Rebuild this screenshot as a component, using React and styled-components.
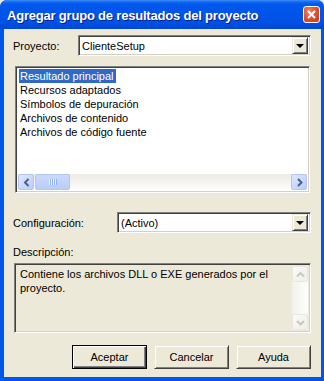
import React from "react";
import styled, { createGlobalStyle, css } from "styled-components";

const Global = createGlobalStyle`
  html, body { margin: 0; padding: 0; background: #ECE9D8; overflow: hidden; }
  body { font-family: "Liberation Sans", Arial, sans-serif; font-size: 11px; color: #000; }
`;

const Window = styled.div`
  width: 324px;
  height: 381px;
  display: flex;
  flex-direction: column;
  box-sizing: border-box;
  background: #0055EA;
  border-radius: 7px 7px 0 0;
  overflow: hidden;
`;

const TitleBar = styled.div`
  height: 29px;
  flex: none;
  display: flex;
  align-items: center;
  justify-content: space-between;
  padding: 0 4px 0 7px;
  box-sizing: border-box;
  background: linear-gradient(to bottom, #3C8CF6 0px, #1569F0 2px, #0058EE 4px, #0055E8 14px, #0052E5 22px, #004AD9 27px, #0045D0 29px);
`;

const TitleText = styled.div`
  color: #fff;
  font-family: "Liberation Sans", Arial, sans-serif;
  font-weight: bold;
  font-size: 13px;
  letter-spacing: -0.2px;
  text-shadow: 1px 1px 0 #0A1E8C;
  white-space: nowrap;
  margin-top: 1px;
`;

const CloseButton = styled.div`
  width: 17px;
  height: 17px;
  box-sizing: border-box;
  border: 1px solid #fff;
  border-radius: 3px;
  background: radial-gradient(circle at 35% 30%, #F08A6A 0%, #E2542C 45%, #C93A12 100%);
  display: flex;
  align-items: center;
  justify-content: center;
  margin-top: -1px;
`;

const Body = styled.div`
  flex: 1;
  display: flex;
  flex-direction: column;
  background: #ECE9D8;
  margin: 0 3px 4px 4px;
  padding: 6px 10px 0 9px;
  box-sizing: border-box;
`;

const FieldRow = styled.div`
  display: flex;
  align-items: center;
  margin-top: ${(p) => p.$top}px;
`;

const Label = styled.div`
  width: ${(p) => p.$width}px;
  flex: none;
`;

const sunken = css`
  border: 1px solid;
  border-color: #808080 #fff #fff #808080;
  box-shadow: inset 1px 1px 0 #404040, inset -1px -1px 0 #D4D0C8;
`;

const Combo = styled.div`
  flex: 1;
  height: 21px;
  box-sizing: border-box;
  ${sunken};
  background: #fff;
  display: flex;
  align-items: center;
  padding: 2px;
`;

const ComboValue = styled.div`
  flex: 1;
  padding-left: 1px;
`;

const raised = css`
  background: #ECE9D8;
  box-sizing: border-box;
  border: 1px solid;
  border-color: #ECE9D8 #404040 #404040 #ECE9D8;
  box-shadow: inset 1px 1px 0 #fff, inset -1px -1px 0 #808080;
`;

const ComboButton = styled.div`
  width: 16px;
  height: 17px;
  ${raised};
  display: flex;
  align-items: center;
  justify-content: center;
`;

const Triangle = styled.div`
  width: 0;
  height: 0;
  border-left: 4px solid transparent;
  border-right: 4px solid transparent;
  border-top: 4px solid #000;
  margin-top: 1px;
`;

const ListBox = styled.div`
  margin-top: 10px;
  margin-left: 2px;
  margin-right: 1px;
  height: 127px;
  box-sizing: border-box;
  ${sunken};
  background: #fff;
  display: flex;
  flex-direction: column;
  padding: 2px;
`;

const ListItems = styled.div`
  flex: 1;
  display: flex;
  flex-direction: column;
  align-items: flex-start;
`;

const ListItem = styled.div`
  height: 14px;
  line-height: 14px;
  padding: 0 2px 0 1px;
  margin-left: 1px;
  white-space: nowrap;
  ${(p) => p.$selected && css`
    background: #316AC5;
    color: #fff;
  `}
`;

const HScroll = styled.div`
  height: 16px;
  display: flex;
  background: linear-gradient(to bottom, #EEEDE5 0%, #F3F1EC 40%, #FEFEFE 100%);
`;

const ScrollBtn = styled.div`
  width: 16px;
  height: 16px;
  box-sizing: border-box;
  flex: none;
  border: 1px solid ${(p) => (p.$disabled ? "#E8E6DD" : "#B4C6F0")};
  border-radius: 2px;
  background: ${(p) =>
    p.$disabled
      ? "linear-gradient(to bottom right, #FBFBF8, #EFEEE6)"
      : "linear-gradient(to bottom right, #DDE8FF, #B8CDFA)"};
  display: flex;
  align-items: center;
  justify-content: center;
`;

const Thumb = styled.div`
  width: 35px;
  height: 16px;
  box-sizing: border-box;
  border: 1px solid #B4C6F0;
  border-radius: 2px;
  background: linear-gradient(to bottom, #CADAFE, #BACDF8);
  display: flex;
  align-items: center;
  justify-content: center;
  margin-left: 1px;
`;

const Track = styled.div`
  flex: 1;
`;

const DescLabel = styled.div`
  margin-top: 13px;
  height: 13px;
  line-height: 13px;
`;

const DescBox = styled.div`
  margin-top: 4px;
  margin-left: 1px;
  height: 70px;
  box-sizing: border-box;
  ${sunken};
  display: flex;
  padding: 2px;
`;

const DescText = styled.div`
  flex: 1;
  padding: 1px 0 0 3px;
  line-height: 14px;
`;

const VScroll = styled.div`
  width: 16px;
  display: flex;
  flex-direction: column;
  background: linear-gradient(to right, #F2F1EB 0%, #FDFDFB 100%);
`;

const ButtonRow = styled.div`
  margin-top: 12px;
  display: flex;
  justify-content: flex-end;
  gap: 7px;
`;

const Button = styled.div`
  width: 75px;
  height: 24px;
  ${raised};
  display: flex;
  align-items: center;
  justify-content: center;
  ${(p) => p.$default && css`
    border-color: #000;
    box-shadow: inset 1px 1px 0 #fff, inset -1px -1px 0 #404040, inset -2px -2px 0 #808080;
  `}
`;

const Chevron = ({ dir, color }) => {
  const paths = {
    left: "M9.5 4 L6 7.5 L9.5 11",
    right: "M6 4 L9.5 7.5 L6 11",
    up: "M4 9.5 L7.5 6 L11 9.5",
    down: "M4 6 L7.5 9.5 L11 6",
  };
  return (
    <svg width="14" height="14" viewBox="0 0 14 14">
      <path d={paths[dir]} fill="none" stroke={color} strokeWidth="2" />
    </svg>
  );
};

const Grip = () => (
  <svg width="8" height="6" viewBox="0 0 8 6">
    {[0, 2, 4, 6].map((x) => (
      <rect key={x} x={x} y="0" width="1" height="6" fill="#EEF4FE" />
    ))}
    {[1, 3, 5, 7].map((x) => (
      <rect key={x} x={x} y="0" width="1" height="6" fill="#8CB0F8" />
    ))}
  </svg>
);

const items = [
  "Resultado principal",
  "Recursos adaptados",
  "Símbolos de depuración",
  "Archivos de contenido",
  "Archivos de código fuente",
];

export default function App() {
  return (
    <>
      <Global />
      <Window>
        <TitleBar>
          <TitleText>Agregar grupo de resultados del proyecto</TitleText>
          <CloseButton>
            <svg width="9" height="9" viewBox="0 0 9 9">
              <path d="M1 1 L8 8 M8 1 L1 8" stroke="#fff" strokeWidth="2" />
            </svg>
          </CloseButton>
        </TitleBar>
        <Body>
          <FieldRow $top={0}>
            <Label $width={65}>Proyecto:</Label>
            <Combo>
              <ComboValue>ClienteSetup</ComboValue>
              <ComboButton><Triangle /></ComboButton>
            </Combo>
          </FieldRow>
          <ListBox>
            <ListItems>
              {items.map((t, i) => (
                <ListItem key={t} $selected={i === 0}>{t}</ListItem>
              ))}
            </ListItems>
            <HScroll>
              <ScrollBtn><Chevron dir="left" color="#4D6185" /></ScrollBtn>
              <Thumb><Grip /></Thumb>
              <Track />
              <ScrollBtn><Chevron dir="right" color="#4D6185" /></ScrollBtn>
            </HScroll>
          </ListBox>
          <FieldRow $top={19}>
            <Label $width={104}>Configuración:</Label>
            <Combo>
              <ComboValue>(Activo)</ComboValue>
              <ComboButton><Triangle /></ComboButton>
            </Combo>
          </FieldRow>
          <DescLabel>Descripción:</DescLabel>
          <DescBox>
            <DescText>Contiene los archivos DLL o EXE generados por el proyecto.</DescText>
            <VScroll>
              <ScrollBtn $disabled><Chevron dir="up" color="#C9C8BE" /></ScrollBtn>
              <Track />
              <ScrollBtn $disabled><Chevron dir="down" color="#C9C8BE" /></ScrollBtn>
            </VScroll>
          </DescBox>
          <ButtonRow>
            <Button $default>Aceptar</Button>
            <Button>Cancelar</Button>
            <Button>Ayuda</Button>
          </ButtonRow>
        </Body>
      </Window>
    </>
  );
}
